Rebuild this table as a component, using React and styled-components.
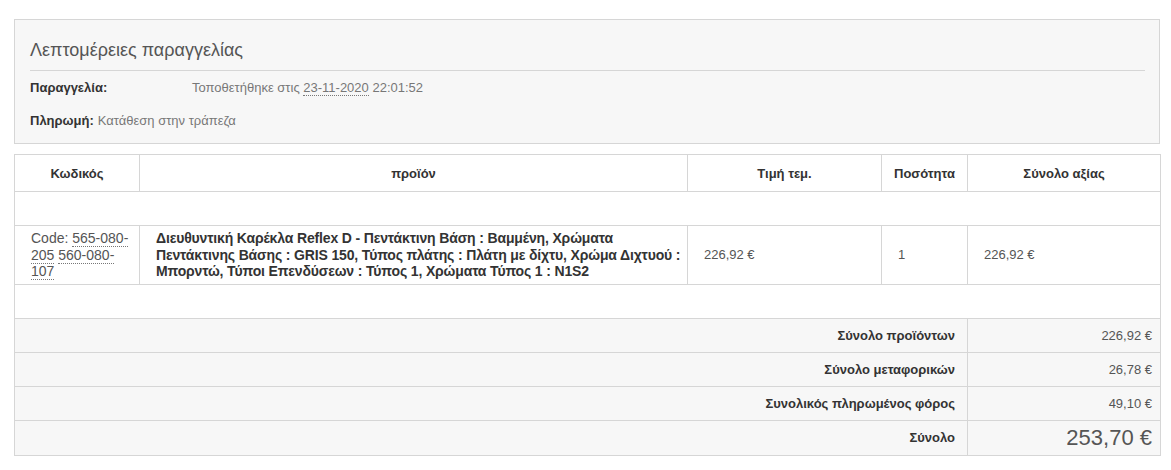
import React from 'react';
import styled, { createGlobalStyle } from 'styled-components';

const GlobalStyle = createGlobalStyle`
  body {
    margin: 0;
    background: #fff;
    font-family: "Liberation Sans", Arial, sans-serif;
    color: #333;
  }
`;

const Page = styled.div`
  padding: 19px 11px 0 14px;
  display: flex;
  flex-direction: column;
  gap: 10px;
`;

const Panel = styled.section`
  background: #f7f7f7;
  border: 1px solid #d6d6d6;
  padding: 20px 14px 14px 15px;
`;

const PanelTitle = styled.h3`
  margin: 0 0 8px;
  padding-bottom: 10px;
  border-bottom: 1px solid #d6d6d6;
  font-size: 18px;
  font-weight: normal;
  line-height: 20px;
  color: #555;
`;

const InfoRow = styled.div`
  display: flex;
  font-size: 13px;
  line-height: 17px;
  color: #777;
  & + & {
    margin-top: 16px;
  }
`;

const InfoLabel = styled.strong`
  color: #333;
  width: ${(p) => (p.$wide ? '162px' : 'auto')};
  margin-right: ${(p) => (p.$wide ? '0' : '4px')};
`;

const Dotted = styled.span`
  border-bottom: 1px dotted #777;
`;

const Table = styled.table`
  width: 1146px;
  border-collapse: collapse;
  table-layout: fixed;
  font-size: 13px;
  line-height: 17px;
  border: 1px solid #d6d6d6;
`;

const Th = styled.th`
  border: 1px solid #d6d6d6;
  height: 36px;
  padding: 0 8px;
  font-weight: bold;
  text-align: center;
  color: #333;
  background: #fff;
`;

const Td = styled.td`
  border: 1px solid #d6d6d6;
  padding: 4px ${(p) => (p.$strong ? '0' : '6px')} 4px 16px;
  vertical-align: middle;
  line-height: 16.5px;
  font-size: ${(p) => (p.$large ? '14px' : '13px')};
  letter-spacing: ${(p) => (p.$strong ? '-0.15px' : 'normal')};
  color: ${(p) => (p.$strong ? '#333' : '#555')};
  font-weight: ${(p) => (p.$strong ? 'bold' : 'normal')};
`;

const SpacerCell = styled.td`
  height: 33px;
  padding: 0;
  border: 1px solid #d6d6d6;
`;

const SummaryRow = styled.tr`
  background: #f7f7f7;
`;

const SummaryLabel = styled.td`
  border: 1px solid #d6d6d6;
  height: ${(p) => (p.$tall ? '34px' : '33px')};
  padding: 0 12px;
  text-align: right;
  font-weight: bold;
  color: #333;
`;

const SummaryValue = styled.td`
  border: 1px solid #d6d6d6;
  padding: 0 8px;
  text-align: right;
  color: #555;
  font-size: ${(p) => (p.$big ? '22px' : '13px')};
`;

const summary = [
  ['Σύνολο προϊόντων', '226,92 €'],
  ['Σύνολο μεταφορικών', '26,78 €'],
  ['Συνολικός πληρωμένος φόρος', '49,10 €'],
];

export default function App() {
  return (
    <>
      <GlobalStyle />
      <Page>
        <Panel>
          <PanelTitle>Λεπτομέρειες παραγγελίας</PanelTitle>
          <InfoRow>
            <InfoLabel $wide>Παραγγελία:</InfoLabel>
            <span>
              Τοποθετήθηκε στις <Dotted>23-11-2020</Dotted> 22:01:52
            </span>
          </InfoRow>
          <InfoRow>
            <InfoLabel>Πληρωμή:</InfoLabel>
            <span>Κατάθεση στην τράπεζα</span>
          </InfoRow>
        </Panel>

        <Table>
          <colgroup>
            <col style={{ width: 125 }} />
            <col style={{ width: 548 }} />
            <col style={{ width: 194 }} />
            <col style={{ width: 86 }} />
            <col style={{ width: 193 }} />
          </colgroup>
          <thead>
            <tr>
              <Th>Κωδικός</Th>
              <Th>προϊόν</Th>
              <Th>Τιμή τεμ.</Th>
              <Th>Ποσότητα</Th>
              <Th>Σύνολο αξίας</Th>
            </tr>
          </thead>
          <tbody>
            <tr>
              <SpacerCell colSpan={5} />
            </tr>
            <tr>
              <Td $large>
                Code: <Dotted>565-080-205</Dotted> <Dotted>560-080-107</Dotted>
              </Td>
              <Td $large $strong>
                Διευθυντική Καρέκλα Reflex D - Πεντάκτινη Βάση : Βαμμένη, Χρώματα
                <br />
                Πεντάκτινης Βάσης : GRIS 150, Τύπος πλάτης : Πλάτη με δίχτυ, Χρώμα Διχτυού :
                <br />
                Μπορντώ, Τύποι Επενδύσεων : Τύπος 1, Χρώματα Τύπος 1 : N1S2
              </Td>
              <Td>226,92 €</Td>
              <Td>1</Td>
              <Td>226,92 €</Td>
            </tr>
            <tr>
              <SpacerCell colSpan={5} />
            </tr>
            {summary.map(([label, value]) => (
              <SummaryRow key={label}>
                <SummaryLabel colSpan={4}>{label}</SummaryLabel>
                <SummaryValue>{value}</SummaryValue>
              </SummaryRow>
            ))}
            <SummaryRow>
              <SummaryLabel colSpan={4} $tall>
                Σύνολο
              </SummaryLabel>
              <SummaryValue $big>253,70 €</SummaryValue>
            </SummaryRow>
          </tbody>
        </Table>
      </Page>
    </>
  );
}
